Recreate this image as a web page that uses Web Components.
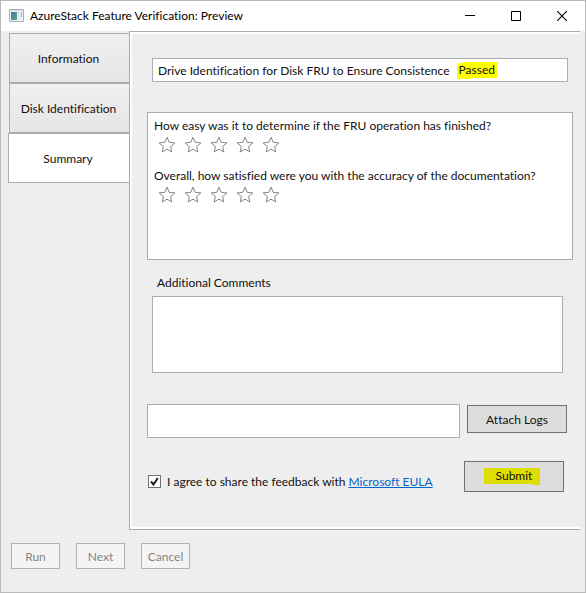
<!DOCTYPE html>
<html lang="en">
<head>
<meta charset="utf-8">
<meta name="viewport" content="width=device-width">
<title>AzureStack Feature Verification: Preview</title>
<style>
  body { margin: 0; font: 12px/16px Lato, "Open Sans", sans-serif; font-variant-ligatures: none; color: #111; }
</style>
</head>
<body>
<app-window heading="AzureStack Feature Verification: Preview">
  <side-tabs slot="tabs">
    <tab-item>Information</tab-item>
    <tab-item>Disk Identification</tab-item>
    <tab-item selected>Summary</tab-item>
  </side-tabs>
  <summary-panel></summary-panel>
  <action-button slot="actions" disabled>Run</action-button>
  <action-button slot="actions" disabled>Next</action-button>
  <action-button slot="actions" disabled>Cancel</action-button>
</app-window>
<script>
class BaseElement extends HTMLElement {
  render(html) {
    this.attachShadow({ mode: "open" }).innerHTML =
      "<style>*{box-sizing:border-box}button,input,textarea{font:inherit;font-variant-ligatures:inherit;color:inherit}</style>" + html;
  }
}

customElements.define("app-window", class extends BaseElement {
  connectedCallback() {
    this.render(`
    <style>
      :host { display: flex; flex-direction: column; box-sizing: border-box; min-height: 100vh; border: 1px solid #bababa; background: #eee; }
      header { display: flex; align-items: center; height: 30px; background: #fff; color: #000; padding-left: 8px; }
      h1 { flex: 1; margin: 0 0 0 5px; font: inherit; font-variant-ligatures: inherit; white-space: nowrap; }
      header button { width: 46px; height: 30px; padding: 0; border: 0; background: none; display: grid; place-items: center; }
      svg { display: block; }
      main { display: grid; grid-template-columns: 121px 1fr; padding: 0 5px 0 7px; }
      footer { display: flex; gap: 16px; padding: 13px 10px; }
    </style>
    <header>
      <svg width="16" height="14" viewBox="0 0 16 14" aria-hidden="true">
        <defs><linearGradient id="g" x2="1" y2="1"><stop stop-color="#4a78a8"/><stop offset="1" stop-color="#58a880"/></linearGradient></defs>
        <path d="M.5.5h14v12H.5z" fill="#eef2f4" stroke="#a9afb4"/>
        <path d="M1 1h13v1H1z" fill="#cfd6dc"/>
        <path d="M2 3h6v8H2z" fill="url(#g)"/>
        <path d="M9 3h2v8H9z" fill="#dce6e2"/><path d="M12 3h1v5h-1z" fill="#9fbcae"/>
      </svg>
      <h1></h1>
      <button aria-label="Minimize"><svg width="10" height="10"><path d="M0 4.500h10" stroke="#000"/></svg></button>
      <button aria-label="Maximize"><svg width="10" height="10"><path d="M.5.5h9v9h-9z" fill="none" stroke="#000"/></svg></button>
      <button aria-label="Close"><svg width="10" height="10"><path d="M0 0l10 10M10 0L0 10" stroke="#000" stroke-width="1.100"/></svg></button>
    </header>
    <main><slot name="tabs"></slot><slot></slot></main>
    <footer><slot name="actions"></slot></footer>`);
    this.shadowRoot.querySelector("h1").textContent = this.getAttribute("heading");
  }
});

customElements.define("side-tabs", class extends BaseElement {
  connectedCallback() {
    this.render(`<style>:host{display:block;padding-top:2px}nav{display:flex;flex-direction:column}</style>
    <nav role="tablist" aria-label="Steps"><slot></slot></nav>`);
  }
});

customElements.define("tab-item", class extends BaseElement {
  connectedCallback() {
    const on = this.hasAttribute("selected");
    this.render(`
    <style>
      :host { display: block; padding-left: 1px; }
      :host([selected]) { padding-left: 0; }
      button { display: block; width: 100%; height: 50px; padding: 2px 2px 0 0; border: 1px solid #acacac; border-right: 0; background: linear-gradient(#f0f0f0, #e5e5e5); white-space: nowrap; }
      :host([selected]) button { background: #fff; }
    </style>
    <button role="tab" aria-selected="${on}"><slot></slot></button>`);
  }
});

customElements.define("action-button", class extends BaseElement {
  connectedCallback() {
    this.render(`
    <style>
      :host { display: block; width: 49px; height: 26px; }
      :host([size=medium]) { width: 100px; height: 28px; }
      :host([size=large]) { width: 100px; height: 31px; }
      button { display: block; width: 100%; height: 100%; padding: 1px 0 0; border: 1px solid #707070; background: #ddd; }
      :host([size=large]) button { padding: 0 4px 0 0; }
      button:disabled { border-color: #adb2b5; background: #f4f4f4; color: #838383; }
    </style>
    <button${this.hasAttribute("disabled") ? " disabled" : ""}><slot></slot></button>`);
  }
});

customElements.define("text-mark", class extends BaseElement {
  connectedCallback() {
    this.render(`
    <style>
      :host { display: inline-block; padding: 0 2px; height: 17px; background:
        linear-gradient(#ff0, #ff0) 0 100% / 14px 16px no-repeat,
        linear-gradient(#ff0, #ff0) 100% 0 / calc(100% - 6px) 16px no-repeat; }
      :host([muted]) { padding: 0 8px 0 12px; background:
        linear-gradient(#dede00, #dede00) 0 0 / calc(100% - 1px) 16px no-repeat,
        linear-gradient(#dede00, #dede00) 100% 100% / 7px 16px no-repeat; }
    </style><slot></slot>`);
  }
});

customElements.define("star-rating", class extends BaseElement {
  connectedCallback() {
    const stars = [1, 2, 3, 4, 5].map(n => `
      <label><input type="radio" name="rating" value="${n}" aria-label="${n} of 5 stars">
        <svg width="18" height="18" viewBox="0 0 18 18" aria-hidden="true">
          <path d="M9 1.200l2.200 5.100 5.700.6-4.300 3.700 1.200 5.400L9 13.200 4.200 16l1.200-5.400L1.100 6.900l5.700-.6z" fill="#fff" stroke="#858585"/>
        </svg></label>`).join("");
    this.render(`
    <style>
      :host { display: block; }
      fieldset { margin: 0; padding: 0; border: 0; min-width: 0; }
      legend { padding: 0; white-space: nowrap; }
      div { display: flex; gap: 8px; padding: 2px 0 1px 4px; }
      label { display: flex; }
      input { appearance: none; width: 0; height: 0; margin: 0; }
      svg { display: block; }
    </style>
    <fieldset><legend><slot></slot></legend><div>${stars}</div></fieldset>`);
  }
});

customElements.define("summary-panel", class extends BaseElement {
  connectedCallback() {
    this.render(`
    <style>
      :host { display: block; border: 1px solid #acacac; border-right: 0; }
      section { border: 2px solid #fff; border-right: 0; padding: 24px 7px 35px 15px; }
      .status { display: flex; align-items: center; gap: 7px; height: 24px; margin: 0 5px; padding: 1px 5px 0; border: 1px solid #abadb3; background: #fff; white-space: nowrap; }
      .questions { display: flex; flex-direction: column; gap: 13px; height: 148px; margin: 30px 0 15px; padding: 5px 6px; border: 1px solid #abadb3; background: #fff; }
      .comments { display: block; padding-left: 10px; }
      textarea { display: block; width: calc(100% - 15px); height: 77px; margin: 5px 10px 31px 5px; border: 1px solid #abadb3; background: #fff; resize: none; }
      .logs { display: flex; align-items: flex-start; gap: 7px; margin-right: 6px; }
      .logs input { flex: 1; min-width: 0; height: 34px; padding: 0 4px; border: 1px solid #abadb3; background: #fff; }
      .logs action-button { margin-top: 1px; }
      .consent { display: flex; justify-content: space-between; margin: 23px 9px 0 1px; }
      .agree { display: flex; align-items: center; gap: 6px; padding-top: 10px; white-space: nowrap; }
      .agree input { appearance: none; width: 13px; height: 13px; margin: 0; border: 1px solid #707070; background: #fff; }
      .agree input:checked { background: #fff url('data:image/svg+xml,<svg xmlns="http://www.w3.org/2000/svg" viewBox="0 0 11 11"><path d="M2 5.500l2.500 3L8.800 2" fill="none" stroke="%23212121" stroke-width="2"/></svg>') center / 11px; }
      a { color: #0066cc; text-decoration: underline; }
    </style>
    <section>
      <div class="status"><span>Drive Identification for Disk FRU to Ensure Consistence</span><text-mark>Passed</text-mark></div>
      <div class="questions">
        <star-rating>How easy was it to determine if the FRU operation has finished?</star-rating>
        <star-rating>Overall, how satisfied were you with the accuracy of the documentation?</star-rating>
      </div>
      <label class="comments" for="comments">Additional Comments</label>
      <textarea id="comments"></textarea>
      <div class="logs"><input type="text" aria-label="Log file"><action-button size="medium">Attach Logs</action-button></div>
      <div class="consent">
        <div class="agree"><input type="checkbox" id="agree" checked><span><label for="agree">I agree to share the feedback with</label> <a href="#eula">Microsoft EULA</a></span></div>
        <action-button size="large"><text-mark muted>Submit</text-mark></action-button>
      </div>
    </section>`);
  }
});
</script>
</body>
</html>
